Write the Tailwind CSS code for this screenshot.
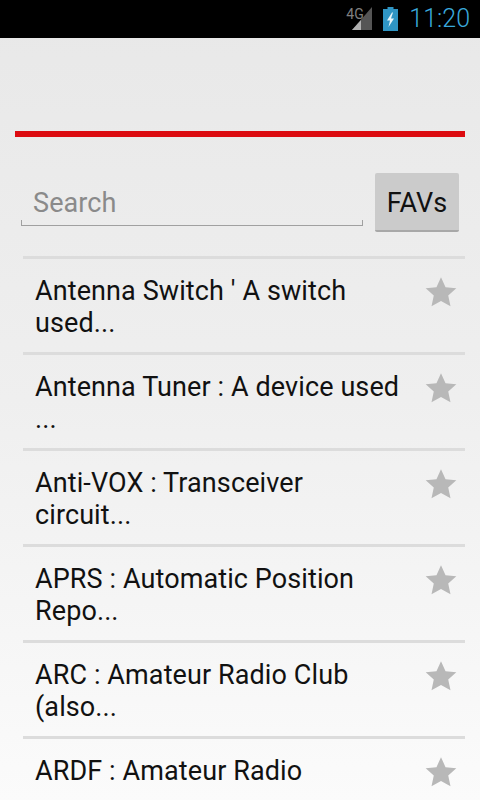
<!DOCTYPE html>
<html lang="en">
<head>
<meta charset="UTF-8" />
<title>Glossary</title>
<script src="https://cdn.jsdelivr.net/npm/@tailwindcss/browser@4"></script>
</head>
<body class="w-[480px] h-[800px] overflow-hidden font-['Roboto',sans-serif] bg-gradient-to-b from-[#e8e8e8] via-[#efefef] to-[#fbfbfb]">
  <!-- status bar -->
  <div class="h-[38px] bg-black flex items-center justify-end">
    <div class="relative w-[27px] h-[24px] mr-[10px]">
      <span class="absolute left-0 top-0 text-[14px] leading-[14px] text-[#808080]">4G</span>
      <svg width="27" height="24" viewBox="0 0 27 24" class="absolute left-0 top-0">
        <path d="M26 0V23H6Z" fill="#555"/>
        <path d="M15 13V23H6Z" fill="#b0b0b0"/>
      </svg>
    </div>
    <svg width="15" height="24" viewBox="0 0 15 24" class="mr-[11px]">
      <path d="M4.500 0h6v2H15v22H0V2h4.500Z" fill="#2f95c4"/>
      <path d="M9 5.500 4 13.500h3L5.500 20l5.500-8.500H8l2-6Z" fill="#e8f6fb"/>
    </svg>
    <span class="text-[25px] leading-[38px] font-light text-[#3aa9dc] mr-[10px]">11:20</span>
  </div>

  <div class="h-[93px]"></div>
  <div class="mx-[15px] h-[6px] bg-[#dc0b10]"></div>

  <!-- search row -->
  <div class="flex items-start ml-[21px] mr-[21px] mt-[35px] h-[60px]">
    <div class="relative w-[342px] h-[54px]">
      <span class="absolute left-[12px] top-[14px] text-[27px] leading-[34px] tracking-[0.1px] text-[#8a8a8a]">Search</span>
      <div class="absolute left-0 right-0 bottom-0 h-[6px] border-x border-b border-[#a0a0a0]"></div>
    </div>
    <div class="ml-[12px] mt-[1px] w-[84px] h-[59px] bg-[#cbcbcb] rounded-[2px] border-b-2 border-[#a8a8a8] flex items-center justify-center pt-[4px] text-[27px] text-[#111]">FAVs</div>
  </div>

  <!-- list -->
  <div class="ml-[23px] mr-[15px] mt-[24px]">
    <div class="h-[96px] border-t-[3px] border-[#dcdcdc] flex justify-between">
      <div class="pl-[12px] pt-[16px] w-[378px] text-[27px] leading-[32px] tracking-[0.1px] text-[#111]">Antenna Switch ' A switch used...</div>
      <svg width="34" height="34" viewBox="0 0 24 24" class="mr-[7px] mt-[16px]"><path d="M12 1.500l3.200 7.100 7.600.8-5.700 5.100 1.600 7.600L12 18.300l-6.700 3.800 1.600-7.600-5.700-5.100 7.600-.8Z" fill="#b8b8b8"/></svg>
    </div>
    <div class="h-[96px] border-t-[3px] border-[#dcdcdc] flex justify-between">
      <div class="pl-[12px] pt-[16px] w-[378px] text-[27px] leading-[32px] tracking-[0.1px] text-[#111]">Antenna Tuner : A device used ...</div>
      <svg width="34" height="34" viewBox="0 0 24 24" class="mr-[7px] mt-[16px]"><path d="M12 1.500l3.200 7.100 7.600.8-5.700 5.100 1.600 7.600L12 18.300l-6.700 3.800 1.600-7.600-5.700-5.100 7.600-.8Z" fill="#b8b8b8"/></svg>
    </div>
    <div class="h-[96px] border-t-[3px] border-[#dcdcdc] flex justify-between">
      <div class="pl-[12px] pt-[16px] w-[378px] text-[27px] leading-[32px] tracking-[0.1px] text-[#111]">Anti-VOX : Transceiver circuit...</div>
      <svg width="34" height="34" viewBox="0 0 24 24" class="mr-[7px] mt-[16px]"><path d="M12 1.500l3.200 7.100 7.600.8-5.700 5.100 1.600 7.600L12 18.300l-6.700 3.800 1.600-7.600-5.700-5.100 7.600-.8Z" fill="#b8b8b8"/></svg>
    </div>
    <div class="h-[96px] border-t-[3px] border-[#dcdcdc] flex justify-between">
      <div class="pl-[12px] pt-[16px] w-[378px] text-[27px] leading-[32px] tracking-[0.1px] text-[#111]">APRS : Automatic Position Repo...</div>
      <svg width="34" height="34" viewBox="0 0 24 24" class="mr-[7px] mt-[16px]"><path d="M12 1.500l3.200 7.100 7.600.8-5.700 5.100 1.600 7.600L12 18.300l-6.700 3.800 1.600-7.600-5.700-5.100 7.600-.8Z" fill="#b8b8b8"/></svg>
    </div>
    <div class="h-[96px] border-t-[3px] border-[#dcdcdc] flex justify-between">
      <div class="pl-[12px] pt-[16px] w-[378px] text-[27px] leading-[32px] tracking-[0.1px] text-[#111]">ARC : Amateur Radio Club (also...</div>
      <svg width="34" height="34" viewBox="0 0 24 24" class="mr-[7px] mt-[16px]"><path d="M12 1.500l3.200 7.100 7.600.8-5.700 5.100 1.600 7.600L12 18.300l-6.700 3.800 1.600-7.600-5.700-5.100 7.600-.8Z" fill="#b8b8b8"/></svg>
    </div>
    <div class="h-[96px] border-t-[3px] border-[#dcdcdc] flex justify-between">
      <div class="pl-[12px] pt-[16px] w-[378px] text-[27px] leading-[32px] tracking-[0.1px] text-[#111]">ARDF : Amateur Radio</div>
      <svg width="34" height="34" viewBox="0 0 24 24" class="mr-[7px] mt-[16px]"><path d="M12 1.500l3.200 7.100 7.600.8-5.700 5.100 1.600 7.600L12 18.300l-6.700 3.800 1.600-7.600-5.700-5.100 7.600-.8Z" fill="#b8b8b8"/></svg>
    </div>
  </div>
</body>
</html>
